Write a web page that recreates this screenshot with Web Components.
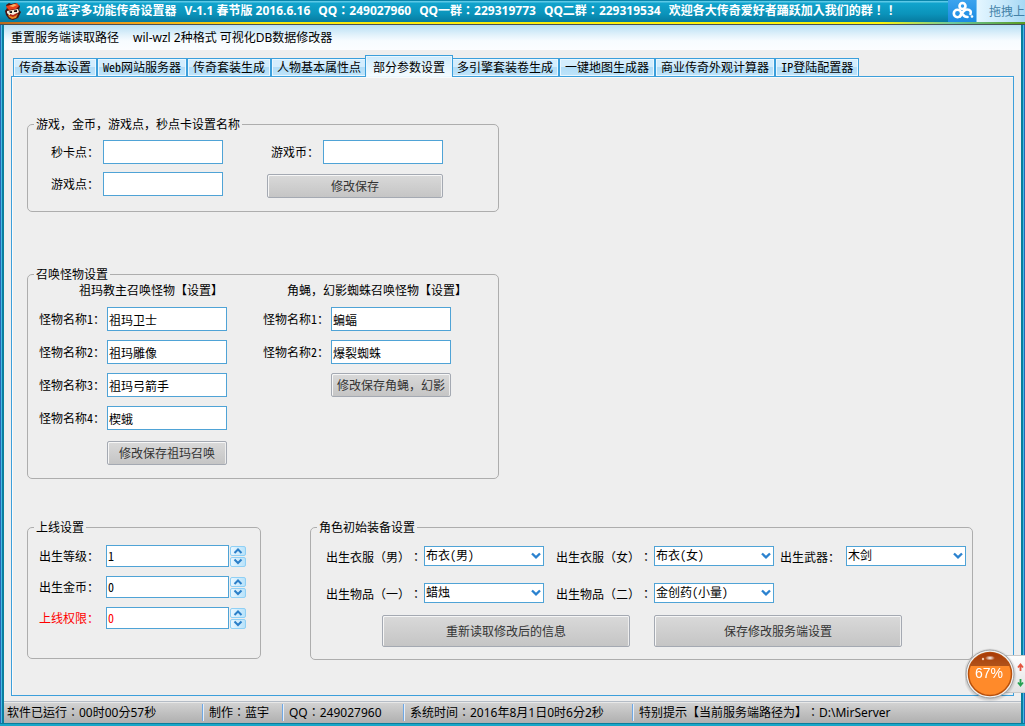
<!DOCTYPE html>
<html lang="zh-CN">
<head>
<meta charset="utf-8">
<title>2016 蓝宇多功能传奇设置器</title>
<style>
  html, body { margin: 0; }
  body {
    --song: "Noto Sans Mono CJK SC", "Noto Sans CJK SC", sans-serif;
    --ui: "Noto Sans", "Noto Sans CJK TC", sans-serif;
    --blue: #3c9fdb;
    min-height: 100vh;
    overflow: hidden;
    font: 12px/16px var(--song);
    text-spacing-trim: space-all;
    color: #000;
    background: #eee;
  }
</style>
</head>
<body>
<app-window></app-window>

<script>
const define = (name, html, setup) => {
  const tpl = document.createElement('template');
  tpl.innerHTML = html;
  customElements.define(name, class extends HTMLElement {
    constructor() {
      super();
      this.attachShadow({ mode: 'open' }).append(tpl.content.cloneNode(true));
    }
    connectedCallback() { if (setup) setup(this, this.shadowRoot); }
  });
};

/* Title bar with the program icon */
define('title-bar', `
<style>
  :host { display: block; position: relative; font: bold 12px/24px var(--ui); color: #fff; font-feature-settings: "locl" 0; }
  .bar { display: flex; align-items: center; gap: 5px; height: 22px; padding-left: 5px; box-sizing: border-box;
    background: linear-gradient(#0785ab 0 1px, #5bc8e6 1px 2px, #10a4cd 3px, #0b93ba 14px, #067a9f); white-space: nowrap; }
  svg { flex: none; display: block; }
  h1 { display: flex; gap: 8px; margin: 0; font: inherit; }
  .line { height: 2px; background: linear-gradient(90deg, #b8691c, #f08a1c 8%, #fbe80e 26%, #fdf30c 86%, #6cc8a0 93%, #5a9a20); }
  .edge { height: 1px; background: #47525a; }
  ::slotted(*) { position: absolute; top: 0; right: 0; }
</style>
<div class="bar">
  <svg width="16" height="18" viewBox="0 0 16 18" aria-hidden="true">
    <path d="M1 3 4 1 6 2 11 1 15 4 14 8 16 10 13 16 8 18 4 17 1 13 0 9 2 6Z" fill="#4a1410"/>
    <path d="M1 4 6 3 12 1 14 4 11 7 4 8 2 6Z" fill="#e8431c"/>
    <path d="M4 4 9 2 12 3 8 5Z" fill="#ffb060"/>
    <path d="M2 9 13 7l1 3-4 3-6 0-2-2Z" fill="#f4ead6"/>
    <path d="M4 9.500 7 9v2H5zM9 8.500 12 8v2H9z" fill="#1a1414"/>
    <path d="M3 13 8 14 13 12 11 16 7 17 4 15Z" fill="#e88a24"/>
    <path d="M5 12 8 13 12 11v2l-4 2-3-1Z" fill="#b32416"/>
  </svg>
  <h1><span>2016 蓝宇多功能传奇设置器</span><span>V-1.1 春节版 2016.6.16</span><span>QQ：249027960</span><span>QQ一群：229319773</span><span>QQ二群：229319534</span><span>欢迎各大传奇爱好者踊跃加入我们的群！！</span></h1>
</div>
<div class="line"></div><div class="edge"></div>
<slot></slot>`);

/* Drag-to-upload widget docked over the title bar */
define('upload-dock', `
<style>
  :host { display: flex; height: 22px; width: 77px; overflow: hidden; font: 12px/24px var(--ui); color: #4482a8; }
  .logo { flex: none; width: 29px; height: 22px; background: linear-gradient(#3ba3ee, #1b8be2); border-right: 1px solid #7cc4f2; box-sizing: border-box; }
  .drop { flex: 1; padding: 0; border: 0; font: inherit; color: inherit; text-align: right; white-space: nowrap;
    background: linear-gradient(90deg, #e4f6ff, #c3e6fa 60%, #a6d8f4); }
</style>
<div class="logo"><svg width="28" height="22" viewBox="0 0 28 22" fill="none" stroke="#fff" stroke-width="2.6" stroke-linecap="round" aria-hidden="true">
  <circle cx="14.500" cy="6" r="3"/><circle cx="9.500" cy="13.500" r="3.700"/>
  <path d="M12 16.500C15 12 15.500 9.500 19 9.500c3.500 0 4.500 2.500 3.500 4.500"/><path d="M15 14.500c1 2 2.500 2.500 4.500 2.500"/><circle cx="24" cy="16.500" r=".6" stroke-width="1.5"/></svg></div>
<button class="drop">拖拽上</button>`);

define('menu-bar', `
<style>
  :host { display: block; height: 25px; background: linear-gradient(#b8dff4, #e2f2fb 10px, #f7fcff 16px, #fbfdff); font: 12px/25px var(--ui); }
  nav { display: flex; gap: 14px; padding-left: 7px; }
  button { padding: 0; border: 0; background: none; font: inherit; color: #000; white-space: nowrap; }
</style>
<nav><button>重置服务端读取路径</button><button>wil-wzl 2种格式 可视化DB数据修改器</button></nav>`);

define('tab-strip', `
<style>
  :host { display: flex; align-items: flex-end; height: 20px; padding-left: 2px; margin-bottom: -1px; position: relative; }
</style>
<slot></slot>`);

define('tab-item', `
<style>
  :host { display: block; flex: none; }
  button { display: block; box-sizing: border-box; height: 19px; margin: 0; padding: 0 5px 2px; border: 1px solid var(--blue); outline: 0;
    box-shadow: inset 0 0 0 1px #e9f7ff; background: linear-gradient(#d3edfd 50%, #b2ddf7 50%, #bfe4fa);
    font: 12px/15px var(--song); color: #000; white-space: nowrap; }
  :host([active]) { margin: 0 -2px; position: relative; z-index: 1; }
  :host([active]) button { height: 22px; padding: 0 7px; border-bottom: 0; background: linear-gradient(#cdeafc, #dff2fd 40%, #f6fcff); line-height: 21px; }
</style>
<button role="tab"><slot></slot></button>`,
(host, root) => root.querySelector('button').setAttribute('aria-selected', host.hasAttribute('active')));

define('group-box', `
<style>
  :host { display: block; }
  fieldset { box-sizing: border-box; margin: 0; min-width: 0; padding: 0; border: 1px solid #adadad; border-radius: 5px; }
  legend { margin-left: 6px; padding: 0 2px; line-height: 16px; }
</style>
<fieldset><legend></legend><slot></slot></fieldset>`,
(host, root) => { root.querySelector('legend').textContent = host.getAttribute('label'); });

const fieldCss = `
  :host { display: flex; align-items: center; justify-content: flex-end; gap: var(--field-gap, 4px); }
  label { white-space: nowrap; }
  input, select { box-sizing: border-box; width: 120px; height: 24px; margin: 0; padding: 0 1px; border: 1px solid #4fa3d6; border-radius: 0;
    outline: 0; background: #fff; font: inherit; color: inherit; }`;

define('text-field', `
<style>${fieldCss}</style>
<label for="f"></label><input id="f" type="text">`,
(host, root) => {
  root.querySelector('label').textContent = host.getAttribute('label');
  root.querySelector('input').value = host.getAttribute('value') || '';
});

define('spin-field', `
<style>${fieldCss}
  :host { justify-content: flex-start; }
  .box { display: flex; align-items: center; gap: 1px; }
  input { width: 123px; height: 22px; padding: 0 1px 2px; appearance: textfield; }
  input::-webkit-inner-spin-button { display: none; }
  .spin { display: grid; gap: 1px; }
  button { display: block; width: 16px; height: 10px; padding: 0; border: 1px solid #8fd0f5; border-radius: 2px; background: linear-gradient(90deg, #e9f7ff, #b8e2fa); box-sizing: border-box; }
  svg { display: block; margin: 0 auto; }
</style>
<label for="f"></label>
<div class="box"><input id="f" type="number">
<div class="spin">
  <button aria-label="增加"><svg width="10" height="8" viewBox="0 0 10 8" fill="none" stroke="#2b7fc8" stroke-width="2"><path d="M1.5 6 5 2.5 8.5 6"/></svg></button>
  <button aria-label="减少"><svg width="10" height="8" viewBox="0 0 10 8" fill="none" stroke="#2b7fc8" stroke-width="2"><path d="M1.5 1.5 5 5 8.5 1.5"/></svg></button>
</div></div>`,
(host, root) => {
  root.querySelector('label').textContent = host.getAttribute('label');
  root.querySelector('input').value = host.getAttribute('value');
});

define('select-field', `
<style>${fieldCss}
  label { padding-top: 2px; }
  :host([centred]) label { font-family: "Noto Sans Mono CJK TC", "Noto Sans CJK TC", sans-serif; font-feature-settings: "locl" 0; }
  .box { display: grid; align-items: center; }
  select { grid-area: 1 / 1; appearance: none; height: 20px; padding: 0 18px 2px 1px; }
  svg { grid-area: 1 / 1; justify-self: end; margin-right: 3px; pointer-events: none; }
</style>
<label for="f"></label>
<div class="box"><select id="f"><option></option></select>
<svg width="10" height="8" viewBox="0 0 10 8" fill="none" stroke="#2b82cf" stroke-width="2.4" aria-hidden="true"><path d="M1 1.5 5 5.3 9 1.5"/></svg></div>`,
(host, root) => {
  root.querySelector('label').textContent = host.getAttribute('label');
  root.querySelector('option').textContent = host.getAttribute('value');
});

define('push-button', `
<style>
  :host { display: block; }
  button { display: block; box-sizing: border-box; width: 100%; height: var(--button-height, 24px); padding: 0 4px; border: 1px solid #a4a9b2; border-radius: 2px;
    box-shadow: inset 1px 1px #f6f6f6, inset -1px 0 #eee; background: linear-gradient(#d9d9d9, #c5c5c5);
    font: 12px/16px var(--song); color: #333; white-space: nowrap; overflow: hidden; }
</style>
<button><slot></slot></button>`);

define('status-bar', `
<style>
  :host { display: flex; height: 22px; border-top: 1px solid #b4bcc6; box-sizing: border-box; box-shadow: inset 0 1px #e8e8e8;
    background: linear-gradient(#d4d4d4, #bdbdbd 60%, #b0b0b0); font: 12px/21px var(--ui); font-feature-settings: "locl" 0; }
  span { box-sizing: border-box; padding-left: 6px; white-space: nowrap; border-left: 1px solid #6fa8e4; box-shadow: inset 1px 0 #e4eefa; margin: 2px 0; line-height: 17px; }
  span:first-of-type { border: 0; box-shadow: none; padding-left: 3px; }
</style>
<span style="width:198px">软件已运行：00时00分57秒</span><span style="width:80px">制作：蓝宇</span><span style="width:121px">QQ：249027960</span><span style="width:229px">系统时间：2016年8月1日0时6分2秒</span><span>特别提示【当前服务端路径为】：D:\\MirServer</span>`);

/* Floating memory meter */
define('memory-ball', `
<style>
  :host { position: fixed; right: 0; bottom: 26px; display: flex; align-items: center; width: 60px; height: 52px; overflow: visible; }
  .side { position: absolute; right: 0; width: 24px; height: 38px; background: linear-gradient(#fdfdfd, #e2e2e2); border: 1px solid #c8c8c8; border-right: 0; box-sizing: border-box; }
  svg { position: relative; display: block; flex: none; }
</style>
<div class="side"></div>
<svg width="60" height="56" viewBox="0 0 60 56" role="img" aria-label="67%">
  <defs>
    <linearGradient id="top" x1="0" y1="0" x2="0" y2="1"><stop offset="0" stop-color="#a83a06"/><stop offset=".3" stop-color="#b0521a"/><stop offset=".45" stop-color="#c8682c"/></linearGradient>
    <radialGradient id="glow"><stop offset="0" stop-color="#fff"/><stop offset="1" stop-color="#fff" stop-opacity="0"/></radialGradient>
    <radialGradient id="shade"><stop offset=".75" stop-color="#000" stop-opacity=".35"/><stop offset="1" stop-color="#000" stop-opacity="0"/></radialGradient>
    <clipPath id="cap"><rect width="60" height="20"/></clipPath>
  </defs>
  <circle cx="25" cy="29" r="27" fill="url(#shade)"/>
  <circle cx="25" cy="28" r="24" fill="#f1f1f1" stroke="#a0a0a0"/>
  <circle cx="25" cy="28" r="21.5" fill="#ff8a2a" stroke="#b8500c" stroke-width="1.5"/>
  <circle cx="25" cy="28" r="21.5" fill="url(#top)" clip-path="url(#cap)"/>
  <ellipse cx="25" cy="12" rx="5" ry="2.5" fill="url(#glow)"/><circle cx="18" cy="13" r="1.2" fill="#f3c8a8"/>
  <text x="24" y="32" text-anchor="middle" font-family="Liberation Sans, sans-serif" font-size="14" fill="#fff">67%</text>
  <path d="M55.500 25v-6M53 21.500 55.500 18.500 58 21.500" fill="none" stroke="#e4553f" stroke-width="1.800"/>
  <path d="M55.500 33v6M53 36.500 55.500 39.500 58 36.500" fill="none" stroke="#27a253" stroke-width="1.800"/>
</svg>`);

define('app-window', `
<style>
  :host { display: flex; flex-direction: column; min-height: 100vh; background: #087f9f; }
  .frame { flex: 1; display: flex; flex-direction: column; padding: 0 4px;
    background: linear-gradient(90deg, #2765b3 0 1px, #48b9e6 1px 2px, #087f9f 2px calc(100% - 2px), #48b9e6 calc(100% - 2px) calc(100% - 1px), #2765b3 calc(100% - 1px)); }
  .client { flex: 1; display: flex; flex-direction: column; background: #eee; }
  .foot { height: 4px; background: linear-gradient(#0a7d9c 0 1px, #19a6c8 1px 3px, #2765b3 3px); }
  main { flex: 1; display: flex; flex-direction: column; padding: 7px 7px 5px; }
  .pane { flex: 1; box-sizing: border-box; padding: 39px 40px 35px 15px; border: 1px solid var(--blue); box-shadow: inset 1px 1px #fafafa; }
  .stack { width: 472px; max-width: 100%; }
  .cards { display: grid; grid-template-columns: 171px 176px; gap: 8px 44px; padding: 8px 24px 15px; }
  .cards push-button { margin: 2px 0 -2px; }
  .second { margin-top: 54px; }
  .cols { display: flex; gap: 36px; padding: 0 11px 13px; --field-gap: 2px; }
  .cols > div { display: flex; flex-direction: column; gap: 9px; width: 188px; }
  h2 { margin: 0; font: inherit; white-space: nowrap; padding-left: 40px; }
  h2.wide { padding-left: 24px; }
  .cols push-button { width: 120px; align-self: flex-end; }
  .zuma push-button { margin-top: 2px; }
  .row { display: flex; gap: 49px; margin-top: 40px; align-items: flex-start; }
  .row group-box:first-child { flex: none; width: 234px; }
  .row group-box:last-child { flex: 1; }
  .online { display: grid; gap: 9px; padding: 10px 11px 29px; --field-gap: 7px; }
  .alert { color: #f00; }
  .gear { display: grid; grid-template-columns: 218px 224px 186px; gap: 17px 6px; padding: 11px 0 12px 15px; --field-gap: 2px; }
  .gear .last { --field-gap: 6px; }
  .actions { display: grid; grid-template-columns: 248px 248px; gap: 24px; padding: 0 0 12px 71px; --button-height: 32px; }
</style>
<title-bar><upload-dock></upload-dock></title-bar>
<div class="frame">
<div class="client">
  <menu-bar></menu-bar>
  <main>
    <tab-strip role="tablist">
      <tab-item>传奇基本设置</tab-item><tab-item>Web网站服务器</tab-item><tab-item>传奇套装生成</tab-item><tab-item>人物基本属性点</tab-item><tab-item active>部分参数设置</tab-item><tab-item>多引擎套装卷生成</tab-item><tab-item>一键地图生成器</tab-item><tab-item>商业传奇外观计算器</tab-item><tab-item>IP登陆配置器</tab-item>
    </tab-strip>
    <section class="pane">
      <div class="stack">
        <group-box label="游戏，金币，游戏点，秒点卡设置名称">
          <div class="cards">
            <text-field label="秒卡点："></text-field>
            <text-field label="游戏币："></text-field>
            <text-field label="游戏点："></text-field>
            <push-button>修改保存</push-button>
          </div>
        </group-box>
        <group-box class="second" label="召唤怪物设置">
          <div class="cols">
            <div class="zuma">
              <h2>祖玛教主召唤怪物【设置】</h2>
              <text-field label="怪物名称1：" value="祖玛卫士"></text-field>
              <text-field label="怪物名称2：" value="祖玛雕像"></text-field>
              <text-field label="怪物名称3：" value="祖玛弓箭手"></text-field>
              <text-field label="怪物名称4：" value="楔蛾"></text-field>
              <push-button>修改保存祖玛召唤</push-button>
            </div>
            <div>
              <h2 class="wide">角蝇，幻影蜘蛛召唤怪物【设置】</h2>
              <text-field label="怪物名称1：" value="蝙蝠"></text-field>
              <text-field label="怪物名称2：" value="爆裂蜘蛛"></text-field>
              <push-button>修改保存角蝇，幻影</push-button>
            </div>
          </div>
        </group-box>
      </div>
      <div class="row">
        <group-box label="上线设置">
          <div class="online">
            <spin-field label="出生等级：" value="1"></spin-field>
            <spin-field label="出生金币：" value="0"></spin-field>
            <spin-field class="alert" label="上线权限：" value="0"></spin-field>
          </div>
        </group-box>
        <group-box label="角色初始装备设置">
          <div class="gear">
            <select-field centred label="出生衣服（男）：" value="布衣(男)"></select-field>
            <select-field centred label="出生衣服（女）：" value="布衣(女)"></select-field>
            <select-field class="last" label="出生武器：" value="木剑"></select-field>
            <select-field centred label="出生物品（一）：" value="蜡烛"></select-field>
            <select-field centred label="出生物品（二）：" value="金创药(小量)"></select-field>
          </div>
          <div class="actions">
            <push-button>重新读取修改后的信息</push-button>
            <push-button>保存修改服务端设置</push-button>
          </div>
        </group-box>
      </div>
    </section>
  </main>
  <status-bar></status-bar>
</div>
</div>
<div class="foot"></div>
<memory-ball></memory-ball>`);
</script>
</body>
</html>
